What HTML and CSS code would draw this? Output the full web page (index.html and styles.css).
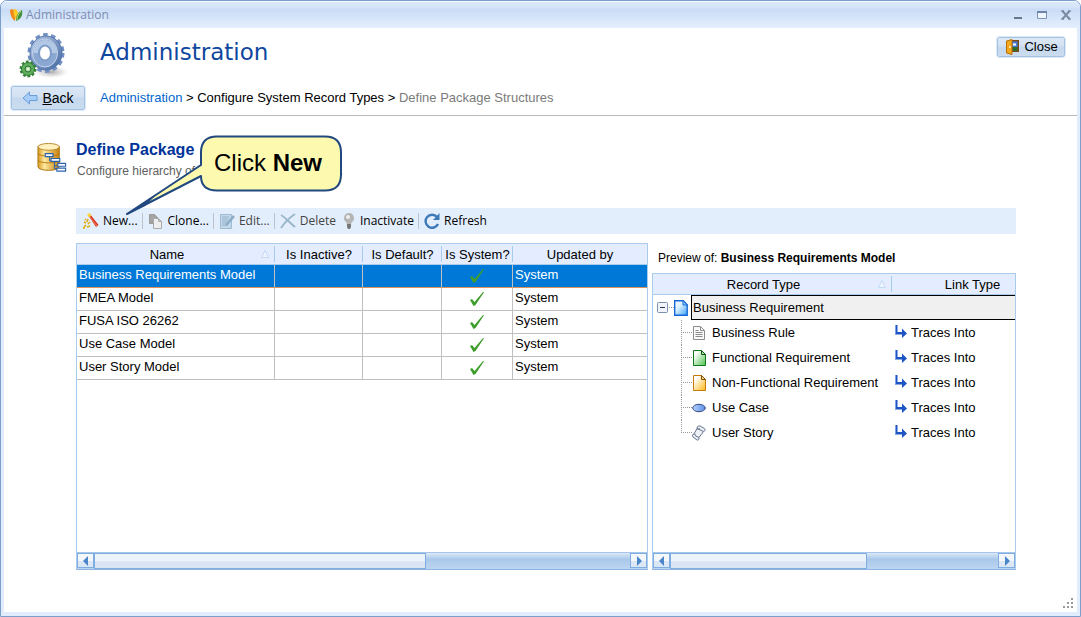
FILE: index.html
```html
<!DOCTYPE html>
<html lang="en">
<head>
  <meta charset="UTF-8">
  <meta name="viewport" content="width=device-width, initial-scale=1.0">
  <title>Administration</title>
  <link rel="stylesheet" href="styles.css">
</head>
<body>
  <!-- shared icons -->
  <svg class="sprite" aria-hidden="true">
    <defs>
      <linearGradient id="gBlue" x1="0" y1="0" x2="1" y2="1"><stop offset="0" stop-color="#fff"/><stop offset=".4" stop-color="#d8efff"/><stop offset="1" stop-color="#3aa0f5"/></linearGradient>
      <linearGradient id="gGreen" x1="0" y1="0" x2="1" y2="1"><stop offset=".2" stop-color="#fff"/><stop offset="1" stop-color="#4cc24c"/></linearGradient>
      <linearGradient id="gOrange" x1="0" y1="0" x2="1" y2="1"><stop offset=".2" stop-color="#fff"/><stop offset="1" stop-color="#fdb813"/></linearGradient>
      <linearGradient id="gOval" x1="0" y1="0" x2="1" y2="0"><stop offset="0" stop-color="#b4d2fb"/><stop offset="1" stop-color="#5c8de6"/></linearGradient>
      <linearGradient id="gGold" x1="0" y1="0" x2="1" y2="0"><stop offset="0" stop-color="#d99a1c"/><stop offset=".3" stop-color="#ffe9a0"/><stop offset="1" stop-color="#c8800c"/></linearGradient>
      <linearGradient id="gGear" x1="0" y1="0" x2="1" y2="1"><stop offset="0" stop-color="#b9cdea"/><stop offset="1" stop-color="#42669f"/></linearGradient>
      <radialGradient id="gShadow"><stop offset="0" stop-color="#888" stop-opacity=".7"/><stop offset="1" stop-color="#aaa" stop-opacity="0"/></radialGradient>
    </defs>
    <symbol id="check" viewBox="0 0 16 16"><path d="M1 9l2-1 2.500 3L14 1l1 .3L6.500 14 4.500 15z" fill="#3f9e2c"/></symbol>
    <symbol id="traces" viewBox="0 0 14 14"><path d="M1 0h2.500v7H8V3.500l5 5L8 13v-3.500H1z" fill="#1e55c5"/><path d="M1 0h1v9.500H1z" fill="#7da2ea"/></symbol>
    <symbol id="sort" viewBox="0 0 8 8"><path d="M.5 7.500L4 .5l3.500 7z" fill="#eef4ff" stroke="#c3d8f4"/></symbol>
    <symbol id="branch" viewBox="0 0 11 25"><path d="M.5 0v25M0 12.500h11" stroke="#999" stroke-dasharray="1 1" fill="none"/></symbol>
    <symbol id="branch-end" viewBox="0 0 11 25"><path d="M.5 0v13M0 12.500h11" stroke="#999" stroke-dasharray="1 1" fill="none"/></symbol>
    <symbol id="arrow-left" viewBox="0 0 8 10"><path d="M6 0v10L1 5z" fill="#4b86c8"/></symbol>
    <symbol id="arrow-right" viewBox="0 0 8 10"><path d="M2 0v10l5-5z" fill="#4b86c8"/></symbol>
  </svg>

  <div class="window">
    <div class="titlebar">
      <svg class="app-icon" viewBox="0 0 14 14">
        <path d="M1 2c2-2 5 0 5 3v8C3 11 1 7 1 2z" fill="#f08a1c"/>
        <path d="M5 1c3 0 4 2 4 6l-2 5C5 9 4 5 5 1z" fill="#ffc928"/>
        <path d="M13 2c1 5-1 9-6 11 0-5 2-9 6-11z" fill="#3e8e3a"/>
        <path d="M12 3c-2 3-4 5-4 9" stroke="#b7da7a" fill="none"/>
      </svg>
      <span class="titlebar-text">Administration</span>
      <button class="win-btn" aria-label="Minimize"><svg viewBox="0 0 10 10"><path d="M1 7h8v2H1z" fill="#66768d"/></svg></button>
      <button class="win-btn" aria-label="Maximize"><svg viewBox="0 0 10 10"><path d="M.5 1.500h9v7h-9z" fill="#eef5ff" stroke="#7e93b5"/><path d="M0 1h10v2H0z" fill="#6d83a8"/></svg></button>
      <button class="win-btn" aria-label="Close window"><svg viewBox="0 0 10 10"><path d="M1.500 1l7 8M8.500 1l-7 8" stroke="#7c8ba1" stroke-width="2"/><path d="M0 1h3M7 1h3M0 9h3M7 9h3" stroke="#66768d"/></svg></button>
    </div>

    <div class="page">
      <header class="header">
        <div class="header-top">
          <svg class="gears" viewBox="0 0 50 50">
            <ellipse cx="32" cy="40" rx="17" ry="6" fill="url(#gShadow)"/>
            <ellipse cx="27" cy="21" rx="16.500" ry="18" fill="none" stroke="#7391c4" stroke-width="4" stroke-dasharray="4.500 3.300"/>
            <ellipse cx="27" cy="21" rx="16" ry="17" fill="url(#gGear)" stroke="#5475ab"/>
            <ellipse cx="26" cy="21" rx="12.500" ry="14" fill="#8ba8d2" stroke="#c4d5ec"/>
            <path d="M14 21a12 13 0 0 1 24 0" fill="#b3c8e5"/>
            <ellipse cx="26" cy="21" rx="6" ry="7.500" fill="#fff" stroke="#7f9dc9" stroke-width="2"/>
            <circle cx="9" cy="37" r="7" fill="none" stroke="#39823a" stroke-width="3" stroke-dasharray="2.600 1.800"/>
            <circle cx="9" cy="37" r="6.500" fill="#5fae5b" stroke="#2f7a33"/>
            <circle cx="9" cy="37" r="3" fill="#a9dba0" stroke="#2c6f30"/>
            <circle cx="9" cy="37" r="1" fill="#fff"/>
          </svg>
          <h1>Administration</h1>
          <button class="btn btn-close">
            <svg viewBox="0 0 16 16"><path d="M6 1h9v12H6z" fill="#7a4a1a"/><path d="M8 2.500h5.500V8H8z" fill="#3f7de0"/><path d="M9 4.500h3v2H9z" fill="#fff"/><path d="M8 8h5.500v4H8z" fill="#2f6b2a"/><path d="M2.500 2L8 .5v15L2.500 14z" fill="#f5a81c" stroke="#b86f08"/><circle cx="6" cy="8" r="1" fill="#fff3c0"/></svg>
            <span>Close</span>
          </button>
        </div>
        <div class="header-nav">
          <button class="btn btn-back">
            <svg viewBox="0 0 16 14"><path d="M1 7l6.500-6v3.500H15v5H7.500V13z" fill="#a6cdf8" stroke="#6a9fdc"/></svg>
            <span><u>B</u>ack</span>
          </button>
          <nav class="crumbs">
            <a href="#">Administration</a> &gt; <span>Configure System Record Types</span> &gt; <span class="current">Define Package Structures</span>
          </nav>
        </div>
      </header>

      <main class="content">
        <section class="intro">
          <svg class="intro-icon" viewBox="0 0 32 32">
            <path d="M1 4v21c0 5 22 5 22 0V4z" fill="url(#gGold)" stroke="#a87516"/>
            <ellipse cx="12" cy="4.500" rx="11" ry="3.500" fill="#fff0bd" stroke="#b98a32"/>
            <path d="M1 11c0 4 22 4 22 0M1 18c0 4 22 4 22 0" fill="none" stroke="#b67c14"/>
            <path d="M13 14v5h6M18 19v8h3M18 24h3" fill="none" stroke="#2a62ab"/>
            <g fill="#fff" stroke="#2a62ab" stroke-width="1.200"><path d="M8.500 11.500h8v3h-8zM14.500 16.500h9v3h-9zM21.500 21.500h8v3h-8zM20.500 26.500h9v3h-9z"/></g>
          </svg>
          <div class="intro-text">
            <h2>Define Package</h2>
            <p><span>Configure hierarchy of</span><span>.</span></p>
          </div>
          <div class="callout">
            <svg viewBox="0 0 218 82"><path d="M90 1.500h110q16 0 16 16v22q0 16-16 16H92q-16 0-16-14.500L2 79 76 30V17.500q0-16 16-16z" fill="#fdfab0" stroke="#21497f" stroke-width="2" stroke-linejoin="round"/><path d="M2 79l30-20-12 12z" fill="#21497f"/></svg>
            <span class="callout-text">Click <b>New</b></span>
          </div>
        </section>

        <div class="toolbar">
          <button><svg viewBox="0 0 16 16"><path d="M5 2l2-1 8.500 11-2.500 2z" fill="#d8341c"/><path d="M6 3l8 10" stroke="#f4876c"/><path d="M4 1.500L6.500 0l2 2.500-2.500 2z" fill="#ffd23a"/><path d="M2 6l1 1M5 6l-1 3M1 9l2 1M7 9l-2 2M3 12l-2 2M7 13l-3 1M0 15h2" stroke="#e0ac10" stroke-width="1.600"/></svg>New...</button>
          <span class="sep"></span>
          <button><svg viewBox="0 0 16 16"><path d="M1.500 1.500h5l3 3v6h-8z" fill="#a5a5a5" stroke="#999"/><path d="M5.500 5.500h5l3 3v7h-8z" fill="#eee" stroke="#aaa"/><path d="M10.500 5.500v3h3z" fill="#ccc" stroke="#aaa"/></svg>Clone...</button>
          <span class="sep"></span>
          <button class="off"><svg viewBox="0 0 16 16"><path d="M1.500 1.500h11v14h-11z" fill="#c3d9ea" stroke="#9dbcd4"/><path d="M3 4h7M3 6h6M3 8h5M3 10h4M3 12h6" stroke="#93b2ca"/><path d="M14 2l2 2-7 8-3 1 1-3z" fill="#8faec8"/></svg>Edit...</button>
          <span class="sep"></span>
          <button class="off"><svg viewBox="0 0 16 16"><path d="M1 2c5 3 9 8 14 12M15 1C9 5 5 9 1 15" stroke="#9ab7cc" stroke-width="2" fill="none"/></svg>Delete</button>
          <button class="bulb"><svg viewBox="0 0 12 16"><path d="M6 0a5 5 0 0 1 3 9l-1 2H4L3 9a5 5 0 0 1 3-9z" fill="#b5b5b5"/><circle cx="5" cy="4" r="2" fill="#eee"/><path d="M4 11h4v3l-1 2H5l-1-2z" fill="#777"/></svg>Inactivate</button>
          <span class="sep"></span>
          <button><svg viewBox="0 0 16 16"><path d="M14 11A6.500 6.500 0 1 1 13 4" fill="none" stroke="#3d79b8" stroke-width="2.400"/><path d="M15.500 0v7H9z" fill="#3d79b8"/></svg>Refresh</button>
        </div>

        <div class="panes">
          <div class="grid">
            <table class="models">
              <colgroup><col class="c-name"><col class="c-inactive"><col class="c-default"><col class="c-system"><col></colgroup>
              <thead>
                <tr><th class="sorted">Name<svg class="sort"><use href="#sort"/></svg></th><th>Is Inactive?</th><th>Is Default?</th><th>Is System?</th><th>Updated by</th></tr>
              </thead>
              <tbody>
                <tr class="selected"><td>Business Requirements Model</td><td></td><td></td><td class="tick"><svg><use href="#check"/></svg></td><td>System</td></tr>
                <tr><td>FMEA Model</td><td></td><td></td><td class="tick"><svg><use href="#check"/></svg></td><td>System</td></tr>
                <tr><td>FUSA ISO 26262</td><td></td><td></td><td class="tick"><svg><use href="#check"/></svg></td><td>System</td></tr>
                <tr><td>Use Case Model</td><td></td><td></td><td class="tick"><svg><use href="#check"/></svg></td><td>System</td></tr>
                <tr><td>User Story Model</td><td></td><td></td><td class="tick"><svg><use href="#check"/></svg></td><td>System</td></tr>
              </tbody>
            </table>
            <div class="scrollbar">
              <button aria-label="Scroll left"><svg><use href="#arrow-left"/></svg></button>
              <div class="track"><div class="thumb"></div></div>
              <button aria-label="Scroll right"><svg><use href="#arrow-right"/></svg></button>
            </div>
          </div>

          <div class="preview">
            <p class="preview-title">Preview of: <b>Business Requirements Model</b></p>
            <div class="grid">
              <table class="tree">
                <colgroup><col class="c-record"><col></colgroup>
                <thead>
                  <tr><th class="sorted">Record Type<svg class="sort"><use href="#sort"/></svg></th><th>Link Type</th></tr>
                </thead>
                <tbody>
                  <tr class="root">
                    <td><div class="node">
                      <svg class="toggle" viewBox="0 0 17 11"><rect x=".5" y=".5" width="10" height="10" rx="1" fill="#f1f4fa" stroke="#7d8fae"/><path d="M3 5.500h5" stroke="#26375e"/><path d="M12 5.500h5" stroke="#999" stroke-dasharray="1 1"/></svg>
                      <svg class="doc" viewBox="0 0 14 16"><path d="M.7.700h8.500l4 4v10.600H.7z" fill="url(#gBlue)" stroke="#1567d8" stroke-width="1.400"/><path d="M9 .7v4.300h4.300z" fill="#9bd0fb" stroke="#1567d8"/></svg>
                      <span class="focus">Business Requirement</span>
                    </div></td>
                    <td></td>
                  </tr>
                  <tr>
                    <td><div class="node"><svg class="branch"><use href="#branch"/></svg><svg class="doc" viewBox="0 0 14 16"><path d="M1.500 1.500h7l4 4v9h-11z" fill="#fafafa" stroke="#8d8d8d"/><path d="M8.500 1.500v4h4M3.500 5.500h3M3.500 7.500h7M3.500 9.500h7M3.500 11.500h7" fill="none" stroke="#8d8d8d"/></svg>Business Rule</div></td>
                    <td><div class="link"><svg><use href="#traces"/></svg>Traces Into</div></td>
                  </tr>
                  <tr>
                    <td><div class="node"><svg class="branch"><use href="#branch"/></svg><svg class="doc" viewBox="0 0 14 16"><path d="M1.500.5h8l4 4v11h-12z" fill="url(#gGreen)" stroke="#0f7a1a"/><path d="M9.500.5v4h4z" fill="#a5e09a" stroke="#0d5c15"/></svg>Functional Requirement</div></td>
                    <td><div class="link"><svg><use href="#traces"/></svg>Traces Into</div></td>
                  </tr>
                  <tr>
                    <td><div class="node"><svg class="branch"><use href="#branch"/></svg><svg class="doc" viewBox="0 0 14 16"><path d="M1.500.5h8l4 4v11h-12z" fill="url(#gOrange)" stroke="#c77a08"/><path d="M9.500.5v4h4z" fill="#ffd97a" stroke="#7f4c05"/></svg>Non-Functional Requirement</div></td>
                    <td><div class="link"><svg><use href="#traces"/></svg>Traces Into</div></td>
                  </tr>
                  <tr>
                    <td><div class="node"><svg class="branch"><use href="#branch"/></svg><svg class="doc" viewBox="0 0 14 16"><ellipse cx="7" cy="8" rx="6.300" ry="3.700" fill="url(#gOval)" stroke="#354a7e"/></svg>Use Case</div></td>
                    <td><div class="link"><svg><use href="#traces"/></svg>Traces Into</div></td>
                  </tr>
                  <tr>
                    <td><div class="node"><svg class="branch"><use href="#branch-end"/></svg><svg class="doc" viewBox="0 0 14 16"><path d="M5 3.500C5 1 7 .5 8 1l4.500 2.500c1 1 .5 3-1 3L7 12.500c.5 2-1 3-2 2.500L1 12C0 11 .5 9 2 9z" fill="#eef1f6" stroke="#66738c"/><path d="M5 3.500c2 1.500 3-.5 3-.5M5 3.500l6.500 3M2 9c2 0 1.500 2 1.500 2L7 12.500" fill="none" stroke="#66738c"/></svg>User Story</div></td>
                    <td><div class="link"><svg><use href="#traces"/></svg>Traces Into</div></td>
                  </tr>
                </tbody>
              </table>
              <div class="scrollbar">
                <button aria-label="Scroll left"><svg><use href="#arrow-left"/></svg></button>
                <div class="track"><div class="thumb thumb-short"></div></div>
                <button aria-label="Scroll right"><svg><use href="#arrow-right"/></svg></button>
              </div>
            </div>
          </div>
        </div>
      </main>
      <svg class="grip" viewBox="0 0 10 10"><path d="M8 0h2v2H8zM4 4h2v2H4zM8 4h2v2H8zM0 8h2v2H0zM4 8h2v2H4zM8 8h2v2H8z" fill="#999"/></svg>
    </div>
  </div>
</body>
</html>
```
FILE: styles.css
```css
* {
  margin: 0;
  padding: 0;
  box-sizing: border-box;
}
body {
  font-family: "Liberation Sans", Arial, sans-serif;
  font-size: 13px;
  line-height: 16px;
  color: #000;
  background: #fff;
}
svg {
  display: block;
  flex: none;
}
button {
  font: inherit;
  color: inherit;
  border: none;
  background: none;
}
.sprite {
  position: absolute;
  width: 0;
  height: 0;
}
.window {
  display: flex;
  flex-direction: column;
  height: 100vh;
  padding: 0 3px 4px;
  border: 1px solid #7d9dcb;
  border-radius: 7px 7px 0 0;
  background: #e1ecfc;
  overflow: hidden;
}

/* title bar */
.titlebar {
  display: flex;
  align-items: center;
  height: 27px;
  padding: 0 2px 0 4px;
  margin: 0 -3px;
  border-top: 1px solid #f4f9ff;
  background: linear-gradient(#dce9fb 0, #d3e3f9 6px, #c9dcf6 7px, #e4effd 100%);
}
.app-icon {
  width: 14px;
  height: 14px;
  margin: 0 3px 0 4px;
}
.titlebar-text {
  flex: 1;
  font-family: "Open Sans", sans-serif;
  font-size: 12px;
  color: #7d8db3;
}
.win-btn {
  width: 24px;
  height: 20px;
  padding: 5px 7px;
}
.win-btn svg {
  width: 10px;
  height: 10px;
}

/* header */
.page {
  position: relative;
  flex: 1;
  display: flex;
  flex-direction: column;
  background: #fff;
}
.header {
  height: 88px;
  border-bottom: 1px solid #b9b9b9;
}
.header-top {
  display: flex;
  height: 56px;
  padding-right: 12px;
}
.gears {
  width: 50px;
  height: 50px;
  margin: 4px 31px 0 15px;
}
h1 {
  flex: 1;
  font-family: "DejaVu Sans", sans-serif;
  font-size: 23px;
  font-weight: normal;
  line-height: 48px;
  color: #0f479f;
}
.btn {
  display: flex;
  align-items: center;
  justify-content: center;
  gap: 4px;
  border: 1px solid #a6c2e2;
  border-radius: 2px;
  outline: 1px solid #dce9f7;
  background: linear-gradient(#dbe7f5 0, #d3e1f2 45%, #c5d8ed 50%, #cbdcef 100%);
}
.btn svg {
  width: 16px;
  height: 16px;
}
.btn-close {
  width: 68px;
  height: 20px;
  margin-top: 9px;
}
.header-nav {
  display: flex;
  align-items: center;
  padding-left: 7px;
}
.btn-back {
  width: 74px;
  height: 24px;
  margin: 2px 15px 0 0;
  font-size: 14px;
}
.crumbs {
  padding-top: 2px;
  white-space: nowrap;
}
.crumbs a {
  color: #0066cc;
  text-decoration: none;
}
.crumbs .current {
  color: #7b7b7b;
}

/* content */
.content {
  flex: 1;
  display: flex;
  flex-direction: column;
  padding: 24px 61px 42px 72px;
}
.intro {
  position: relative;
  display: flex;
  gap: 8px;
  height: 68px;
  margin-left: -39px;
}
.intro-icon {
  width: 31px;
  height: 32px;
  margin-top: 2px;
}
.intro-text {
  width: 267px;
}
h2 {
  font-size: 16px;
  line-height: 20px;
  color: #003399;
}
.intro-text p {
  display: flex;
  justify-content: space-between;
  padding-left: 1px;
  font-size: 12px;
  line-height: 22px;
  color: #606060;
}
.callout {
  position: absolute;
  top: -5px;
  left: 88px;
  width: 218px;
  height: 82px;
}
.callout-text {
  position: absolute;
  top: 14px;
  left: 89px;
  font-size: 24px;
  line-height: 28px;
  white-space: nowrap;
}
.toolbar {
  display: flex;
  align-items: center;
  height: 26px;
  padding-left: 7px;
  margin-bottom: 9px;
  background: #e3eefc;
  font-family: "Open Sans", sans-serif;
  font-size: 12px;
}
.toolbar button {
  display: flex;
  align-items: center;
  gap: 4px;
}
.toolbar svg {
  width: 16px;
  height: 16px;
}
.toolbar .off {
  color: #444;
}
.toolbar .bulb {
  margin-left: 6px;
}
.toolbar .bulb svg {
  width: 14px;
}
.sep {
  width: 1px;
  height: 16px;
  margin: 0 5px 0 4px;
  background: #bcc3cc;
}

/* grids */
.panes {
  flex: 1;
  display: grid;
  grid-template-columns: 572fr 364fr;
  gap: 4px;
}
.preview {
  display: flex;
  flex-direction: column;
  min-width: 0;
}
.preview-title {
  height: 30px;
  padding-left: 6px;
  font-size: 12px;
  line-height: 30px;
}
.grid {
  flex: 1;
  display: flex;
  flex-direction: column;
  justify-content: space-between;
  min-width: 0;
  border: 1px solid #a9cbec;
  border-bottom-color: #8cb5e3;
  overflow: hidden;
}
table {
  width: 100%;
  table-layout: fixed;
  border-spacing: 0;
}
.c-name {
  width: 198px;
}
.c-inactive {
  width: 88px;
}
.c-default {
  width: 79px;
}
.c-system {
  width: 71px;
}
.c-record {
  width: 239px;
}
th {
  position: relative;
  height: 21px;
  padding-top: 2px;
  font-weight: normal;
  border-bottom: 1px solid #a9cbec;
  background: linear-gradient(#a9cbec, #a9cbec) right center / 1px 16px no-repeat #e3edff;
}
th:last-child {
  background: #e3edff;
}
th.sorted {
  padding-right: 18px;
}
.sort {
  position: absolute;
  top: 6px;
  right: 6px;
  width: 8px;
  height: 8px;
}
.models td {
  height: 23px;
  padding: 2px 2px 0;
  line-height: 16px;
  vertical-align: top;
  border-right: 1px solid #c0c0c0;
  border-bottom: 1px solid #c0c0c0;
}
.models td:last-child {
  border-right: none;
}
.models .selected td {
  color: #fff;
  background: #0078d7;
  background-clip: padding-box;
  border-bottom-color: #e0915a;
}
.tick svg {
  width: 16px;
  height: 16px;
  margin: 1px auto 0;
}
.tree {
  width: 400px;
}
.tree td {
  height: 25px;
}
.node,
.link {
  display: flex;
  align-items: center;
  height: 25px;
  white-space: nowrap;
}
.branch {
  width: 11px;
  height: 25px;
  margin-left: 28px;
}
.doc {
  width: 14px;
  height: 16px;
  margin-right: 6px;
}
.toggle {
  width: 17px;
  height: 11px;
  margin-left: 4px;
}
.root .doc {
  margin-right: 3px;
}
.focus {
  flex: 1;
  height: 25px;
  padding-left: 1px;
  line-height: 24px;
  border: 1px solid #000;
  border-right: none;
  background: #f0f0f0;
}
.root td:last-child {
  border-top: 1px solid #000;
  border-bottom: 1px solid #000;
  background: #f0f0f0;
}
.link svg {
  width: 14px;
  height: 14px;
  margin: 0 3px 2px 2px;
}

/* scroll bars */
.scrollbar {
  display: flex;
  height: 17px;
  border-top: 1px solid #a6c6ec;
  background: linear-gradient(#dbe8f8, #a9c8ea 40%, #bcd5f0);
}
.scrollbar button {
  width: 17px;
  height: 15px;
  padding: 2px 4px;
  border: 1px solid #7fade0;
  background: linear-gradient(#f4f8fd 50%, #dbe7f5 55%);
}
.scrollbar button svg {
  width: 8px;
  height: 10px;
}
.track {
  flex: 1;
}
.thumb {
  width: 62%;
  height: 16px;
  border: 1px solid #7fade0;
  background: linear-gradient(#edf3fb 50%, #d9e5f4 55%);
}
.thumb-short {
  width: 60%;
}
.grip {
  position: absolute;
  right: 4px;
  bottom: 4px;
  width: 10px;
  height: 10px;
}
```
